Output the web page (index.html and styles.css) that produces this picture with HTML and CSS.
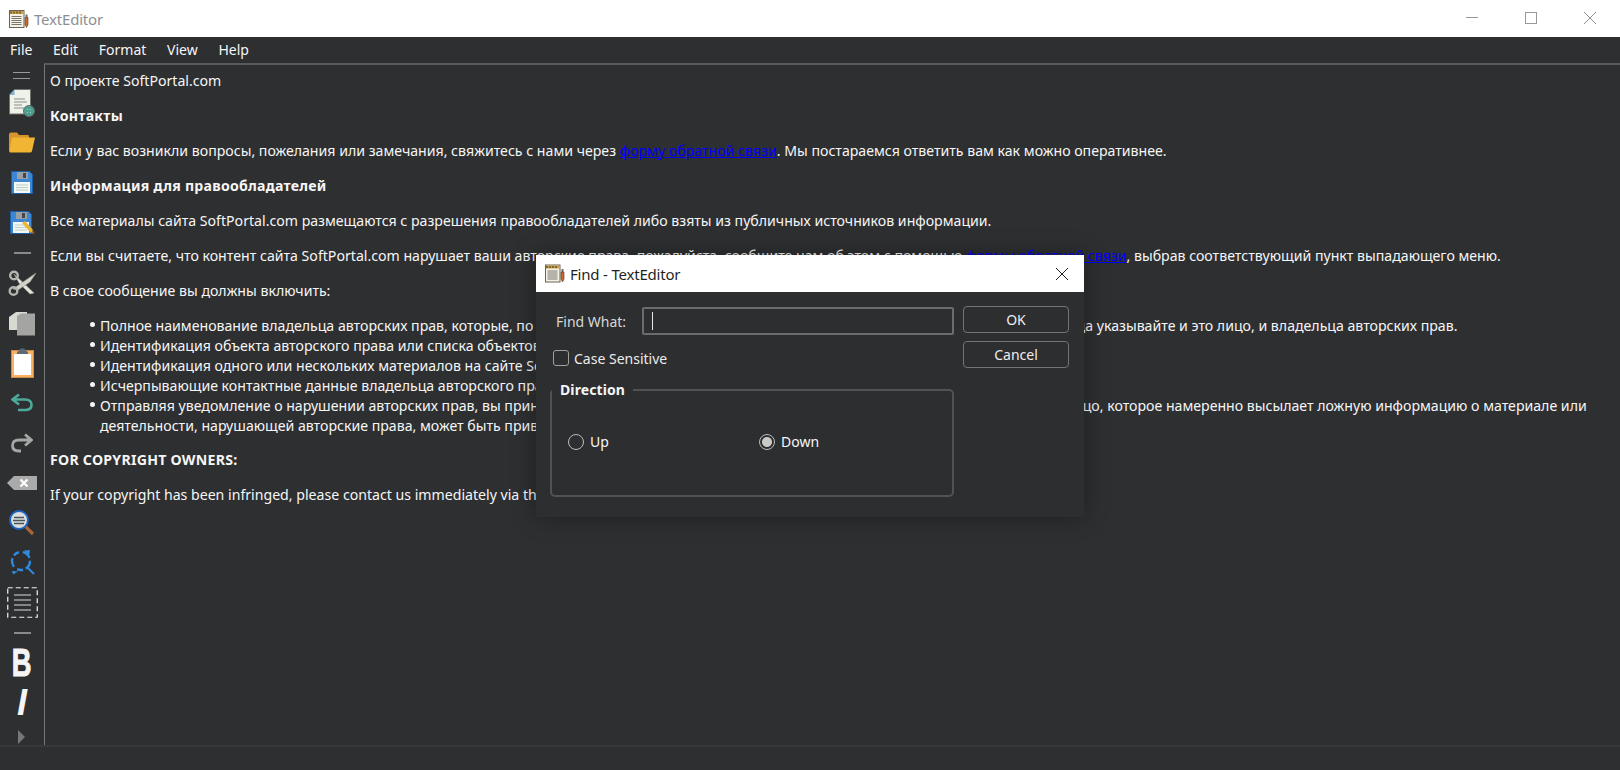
FILE: index.html
```html
<!DOCTYPE html>
<html lang="ru">
<head>
<meta charset="utf-8">
<title>TextEditor</title>
<link rel="stylesheet" href="styles.css">
</head>
<body>
<svg class="defs" width="0" height="0" aria-hidden="true">
  <defs>
    <symbol id="app" viewBox="0 0 20 18">
      <rect x="0.5" y="0.5" width="14.5" height="17" fill="#f4f1e6" stroke="#6a6256"/>
      <rect x="1" y="1" width="13.5" height="3" fill="#c9a04a"/>
      <path d="M2 1.5v2M5 1.5v2M8 1.5v2M11 1.5v2" stroke="#3a3128"/>
      <path d="M2.500 6.500h10M2.500 8.500h10M2.500 10.500h10M2.500 12.500h10M2.500 14.500h10" stroke="#77756e"/>
      <path d="M16.500 4.500h2v3h-2z" fill="#6b6b66"/>
      <path d="M16 7.500h3v7l-1.500 3l-1.500-3z" fill="#c96a2d" stroke="#5c3a20" stroke-width=".6"/>
    </symbol>
    <symbol id="floppy" viewBox="0 0 22 23">
      <path d="M.5.500h18l3 3v19h-21z" fill="#3c86d4" stroke="#1d5ea8"/>
      <rect x="6" y="1" width="11" height="7" fill="#9a9fa3"/>
      <rect x="12" y="2" width="3" height="5" fill="#44484c"/>
      <rect x="3" y="11" width="16" height="11" fill="#f4f7f5"/>
      <path d="M5 14h12M5 16.500h12M5 19h12" stroke="#b9cfc4"/>
    </symbol>
  </defs>
</svg>
<div class="app">
  <header class="titlebar">
    <svg class="app-icon"><use href="#app"/></svg>
    <span class="title">TextEditor</span>
    <div class="win-controls">
      <svg class="win-btn" viewBox="0 0 14 14"><path d="M1 6.500h12" stroke="#999"/></svg>
      <svg class="win-btn" viewBox="0 0 14 14"><rect x="1.500" y="1.500" width="11" height="11" fill="none" stroke="#999"/></svg>
      <svg class="win-btn" viewBox="0 0 14 14"><path d="M1 1l12 12M13 1L1 13" stroke="#8f928a"/></svg>
    </div>
  </header>
  <nav class="menubar">
    <span>File</span><span>Edit</span><span>Format</span><span>View</span><span>Help</span>
  </nav>
  <div class="workspace">
    <aside class="toolbar">
      <div class="grip"></div>
      <div class="tool"><svg width="26" height="28" viewBox="0 0 26 28">
        <path d="M5.500.5H21.500V25H.5V6z" fill="#eef2e8" stroke="#6f7470"/>
        <path d="M.5 6h5V.5z" fill="#7fb2d6"/>
        <path d="M5 10h11M5 13h13M5 16h8M5 19h10" stroke="#8b8f8b"/>
        <circle cx="20" cy="22" r="5.500" fill="#4f9e92" stroke="#5f6a68"/>
        <path d="M18 20.500h.8M21 20.500h.8M18 23.500h.8M21 23.500h.8" stroke="#a6d6cc"/>
      </svg></div>
      <div class="tool"><svg width="26" height="21" viewBox="0 0 26 21">
        <path d="M0 2.500Q0 .5 2 .5H8L10 3H19Q20 3 20 5V20H2Q0 20 0 18z" fill="#d8952d"/>
        <path d="M3 5.500H26L23 19Q22.800 20.500 21 20.500H1.500Q0 20.500 .5 19z" fill="#f0b533"/>
      </svg></div>
      <div class="tool"><svg class="floppy"><use href="#floppy"/></svg></div>
      <div class="tool"><svg width="25" height="24" viewBox="0 0 25 24">
        <use href="#floppy" width="22" height="23"/>
        <path d="M12 12l3-2l8 9l-2 3z" fill="#eeb52f"/>
        <path d="M21 22l2-3l1.500 4z" fill="#a5672e"/>
      </svg></div>
      <div class="tool-sep"></div>
      <div class="tool"><svg width="29" height="26" viewBox="0 0 29 26">
        <path d="M6 4L26 23L22 24L11 13z" fill="#e3e5da" stroke="#9a9c94" stroke-width=".6"/>
        <path d="M28 3L5 19L10 20L22 12z" fill="#d2d4ca" stroke="#9a9c94" stroke-width=".6"/>
        <circle cx="6" cy="5.500" r="3.800" fill="none" stroke="#b5b6b1" stroke-width="2.400"/>
        <circle cx="5.500" cy="21" r="3.800" fill="none" stroke="#b5b6b1" stroke-width="2.400"/>
      </svg></div>
      <div class="tool"><svg width="26" height="26" viewBox="0 0 26 26">
        <path d="M0 7L7 2H18V20H0z" fill="#d5dbd1"/>
        <path d="M8 6L12 3.500H26V25.500H8z" fill="#a4a5a3"/>
      </svg></div>
      <div class="tool"><svg width="23" height="30" viewBox="0 0 23 30">
        <rect x=".5" y="2.500" width="22" height="27" fill="#fbb063" stroke="#c98a4d"/>
        <rect x="3" y="6" width="17" height="21" fill="#ffffff"/>
        <path d="M6 4.500Q6 3 8 3L9.500 .5h4L15 3Q17 3 17 4.500V6H6z" fill="#5a6a76"/>
      </svg></div>
      <div class="tool"><svg width="22" height="19" viewBox="0 0 22 19">
        <path d="M8 1.500L1.500 6.500L8 11.500M2 6.500H14Q20.500 6.500 20.500 12Q20.500 17 14 17H7" fill="none" stroke="#4fa99b" stroke-width="2.600"/>
      </svg></div>
      <div class="tool"><svg width="22" height="20" viewBox="0 0 22 20">
        <path d="M14 1.500L20.500 7L14 12.500M20 7H8Q1.500 7 1.500 12.500Q1.500 18 8 18H10" fill="none" stroke="#a7a7a6" stroke-width="2.800"/>
      </svg></div>
      <div class="tool"><svg width="30" height="14" viewBox="0 0 30 14">
        <path d="M0 7L7 0H30V14H7z" fill="#a9aaa9"/>
        <path d="M13.500 3.500l7 7M20.500 3.500l-7 7" stroke="#fff" stroke-width="2.200"/>
      </svg></div>
      <div class="tool"><svg width="26" height="26" viewBox="0 0 26 26">
        <path d="M16 16l8 8" stroke="#a5673a" stroke-width="3.200"/>
        <circle cx="10" cy="10" r="9" fill="#d9dedd" stroke="#1f63c2" stroke-width="2"/>
        <path d="M5 7.500h10M4 10.500h12M5 13.500h10" stroke="#4c5156" stroke-width="1.500"/>
      </svg></div>
      <div class="tool"><svg width="25" height="25" viewBox="0 0 25 25">
        <circle cx="11" cy="11" r="9" fill="none" stroke="#2f8ae0" stroke-width="2.400" stroke-dasharray="9 3 6 4"/>
        <path d="M17 17l7 7" stroke="#2f8ae0" stroke-width="2"/>
        <path d="M14 .5l6-.5l-1 6zM2 21l6 .5l-5 3z" fill="#2f8ae0"/>
      </svg></div>
      <div class="tool"><svg width="31" height="31" viewBox="0 0 31 31">
        <rect x=".75" y=".75" width="29.500" height="29.500" fill="none" stroke="#f2f2f2" stroke-width="1.200" stroke-dasharray="5 3"/>
        <path d="M7 8h17M7 13h17M7 18h17M7 23h17" stroke="#d9d9d9" stroke-width="1.200"/>
      </svg></div>
      <div class="tool-sep"></div>
      <div class="tool"><span class="glyph-b">B</span></div>
      <div class="tool"><span class="glyph-i">I</span></div>
      <div class="more"></div>
    </aside>
    <main class="doc">
      <p>О проекте SoftPortal.com</p>
      <p><b>Контакты</b></p>
      <p>Если у вас возникли вопросы, пожелания или замечания, свяжитесь с нами через <a href="#">форму обратной связи</a>. Мы постараемся ответить вам как можно оперативнее.</p>
      <p><b>Информация для правообладателей</b></p>
      <p>Все материалы сайта SoftPortal.com размещаются с разрешения правообладателей либо взяты из публичных источников информации.</p>
      <p>Если вы считаете, что контент сайта SoftPortal.com нарушает ваши авторские права, пожалуйста, сообщите нам об этом с помощью <a href="#">формы обратной связи</a>, выбрав соответствующий пункт выпадающего меню.</p>
      <p>В свое сообщение вы должны включить:</p>
      <ul>
        <li>Полное наименование владельца авторских прав, которые, по вашему мнению, были нарушены. Если же вы действуете от имени другого лица указывайте и это лицо, и владельца авторских прав.</li>
        <li>Идентификация объекта авторского права или списка объектов, права на которые были нарушены.</li>
        <li>Идентификация одного или нескольких материалов на сайте SoftPortal.com, нарушающих авторские права.</li>
        <li>Исчерпывающие контактные данные владельца авторского права.</li>
        <li>Отправляя уведомление о нарушении авторских прав, вы принимаете на себя ответственность за достоверность представленных данных. Лицо, которое намеренно высылает ложную информацию о материале или<br>деятельности, нарушающей авторские права, может быть привлечено к ответственности.</li>
      </ul>
      <p><b>FOR COPYRIGHT OWNERS:</b></p>
      <p>If your copyright has been infringed, please contact us immediately via the feedback form.</p>
    </main>
  </div>
  <footer class="statusbar"></footer>

  <section class="dialog">
    <div class="dlg-title">
      <svg class="dlg-icon"><use href="#app"/></svg>
      <span>Find - TextEditor</span>
      <svg class="dlg-close" viewBox="0 0 14 14"><path d="M1 1l12 12M13 1L1 13" stroke="#222"/></svg>
    </div>
    <div class="dlg-body">
      <div class="dlg-main">
        <div class="find-row">
          <label class="find-label">Find What:</label>
          <div class="find-input"><i class="caret"></i></div>
        </div>
        <div class="check-row"><i class="checkbox"></i><span>Case Sensitive</span></div>
        <fieldset class="group">
          <legend>Direction</legend>
          <div class="radio-row">
            <div class="radio-item"><i class="radio"></i><span>Up</span></div>
            <div class="radio-item"><i class="radio on"></i><span>Down</span></div>
          </div>
        </fieldset>
      </div>
      <div class="dlg-buttons">
        <div class="btn">OK</div>
        <div class="btn">Cancel</div>
      </div>
    </div>
  </section>
</div>
</body>
</html>
```
FILE: styles.css
```css
* { box-sizing: border-box; }
html, body { margin: 0; height: 100%; }
body {
  font-family: "Noto Sans", "Open Sans", sans-serif;
  font-size: 14px;
  color: #f6f6f6;
  background: #2e2f31;
  overflow: hidden;
}
.defs { position: absolute; }
.app {
  position: relative;
  width: 1620px;
  height: 770px;
  display: grid;
  grid-template-rows: 37px 26px 1fr 25px;
}
.titlebar {
  background: #fff;
  display: flex;
  align-items: center;
  padding-left: 9px;
}
.app-icon { width: 20px; height: 18px; }
.title { margin-left: 5px; color: #8d9094; font-size: 15px; letter-spacing: -.2px; }
.win-controls { margin-left: auto; margin-bottom: 1px; display: flex; gap: 45px; padding-right: 23px; }
.win-btn { width: 14px; height: 14px; }
.menubar { display: flex; gap: 20.700px; padding: 3px 0 0 10px; font-size: 14px; line-height: 20px; }
.workspace { display: grid; grid-template-columns: 44px 1fr; min-height: 0; }
.toolbar {
  display: flex;
  flex-direction: column;
  align-items: stretch;
  border-top: 2px solid #2e2f31;
}
.grip { height: 17.500px; display: flex; flex-direction: column; }
.grip::before {
  content: "";
  display: block;
  height: 5px;
  width: 17px;
  margin: 7px 0 0 13px;
  border-top: 1px solid #9a9a9a;
  border-bottom: 1px solid #9a9a9a;
}
.tool { height: 40px; display: flex; align-items: center; justify-content: center; }
.tool-sep { height: 20px; display: flex; align-items: center; justify-content: center; }
.tool-sep::before { content: ""; width: 17px; height: 2px; background: #8a8a8a; }
.floppy { width: 22px; height: 23px; }
.glyph-b { font: 700 38px/40px "Liberation Sans", sans-serif; color: #f5f5f5; -webkit-text-stroke: 1px #f5f5f5; transform: scaleX(.72); }
.glyph-i { font: italic 700 36px/40px "Liberation Sans", sans-serif; color: #f5f5f5; }
.more {
  width: 0; height: 0;
  margin: 7px 0 0 18px;
  border-left: 7px solid #777;
  border-top: 7px solid transparent;
  border-bottom: 7px solid transparent;
}
.doc {
  border-left: 1px solid #77787a;
  border-top: 2px solid #58595b;
  padding: 6px 0 0 5px;
  font-size: 14.130px;
  line-height: 20px;
  overflow: hidden;
  white-space: nowrap;
}
.doc p { margin: 0 0 15px; }
.doc b { font-weight: 700; letter-spacing: .25px; }
.doc a { color: #0000ff; }
.doc ul { margin: 0 0 14px; padding: 0 0 0 50px; list-style: none; }
.doc li { position: relative; }
.doc li::before {
  content: "";
  position: absolute;
  left: -10.500px;
  top: 5.500px;
  width: 5.500px;
  height: 5.500px;
  border-radius: 50%;
  background: #f6f6f6;
}
.statusbar { border-top: 2px solid #38393b; }

.dialog {
  position: absolute;
  left: 536px;
  top: 255px;
  width: 548px;
  height: 262px;
  background: #2d2e30;
  box-shadow: 0 0 22px rgba(0, 0, 0, .35);
}
.dlg-title {
  height: 37px;
  background: #fff;
  color: #1f1f1f;
  display: flex;
  align-items: center;
  padding: 0 15px 0 9px;
  font-size: 15px;
  letter-spacing: -.2px;
}
.dlg-icon { width: 20px; height: 19px; margin-right: 5px; }
.dlg-close { width: 14px; height: 14px; margin-left: auto; }
.dlg-body { display: flex; padding: 14px 15px 0 14px; gap: 9px; }
.dlg-main { width: 404px; }
.find-row { display: flex; align-items: center; height: 28px; margin-top: 1px; }
.find-label { width: 92px; padding-left: 6px; color: #d8d8d8; }
.find-input { flex: 1; height: 28px; border: 2px solid #6b6c6e; border-radius: 2px; padding: 3px 0 0 8px; }
.caret { display: block; width: 1px; height: 18px; background: #e8e8e8; }
.check-row { display: flex; align-items: center; gap: 5px; margin: 15px 0 0 3px; height: 16px; color: #ececec; }
.checkbox { width: 16px; height: 16px; border: 1px solid #a0a0a0; border-radius: 3px; }
.group {
  margin: 14px 0 0;
  padding: 0 0 0 16px;
  height: 117px;
  border: 2px solid #515254;
  border-radius: 5px;
  position: relative;
}
.group legend { padding: 0 8px; margin-left: -16px; margin-top: -2px; font-weight: 700; color: #f6f6f6; line-height: 19px; letter-spacing: .1px; }
.radio-row { display: flex; padding-top: 33px; }
.radio-item { display: flex; align-items: center; gap: 6px; width: 191px; }
.radio { width: 16px; height: 16px; border: 1px solid #bcbcbc; border-radius: 50%; }
.radio.on { background: radial-gradient(circle, #c9cbc9 0 4.500px, #2d2e30 5.500px); }
.dlg-buttons { width: 106px; display: flex; flex-direction: column; gap: 8px; }
.btn {
  height: 27px;
  border: 1px solid #737476;
  border-radius: 4px;
  display: flex;
  align-items: center;
  justify-content: center;
  color: #ededed;
}
```
